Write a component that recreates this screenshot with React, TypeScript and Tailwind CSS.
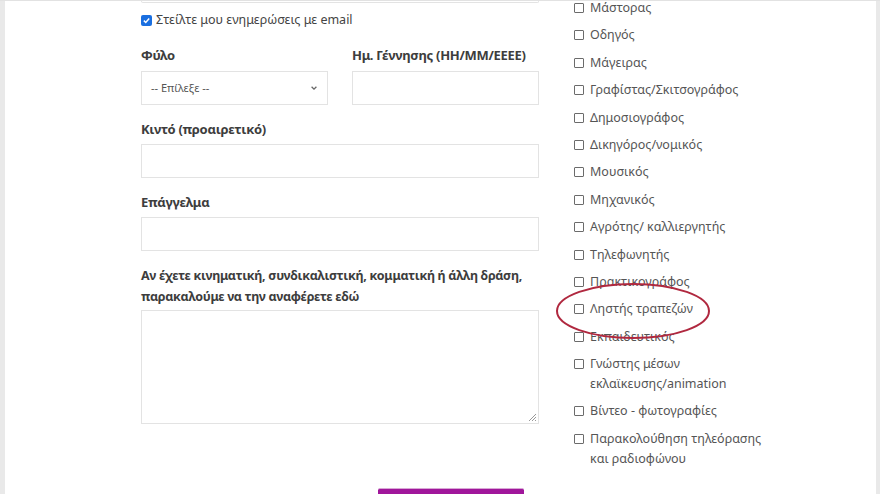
import React from "react";

const professions: string[][] = [
  ["Μάστορας"],
  ["Οδηγός"],
  ["Μάγειρας"],
  ["Γραφίστας/Σκιτσογράφος"],
  ["Δημοσιογράφος"],
  ["Δικηγόρος/νομικός"],
  ["Μουσικός"],
  ["Μηχανικός"],
  ["Αγρότης/ καλλιεργητής"],
  ["Τηλεφωνητής"],
  ["Πρακτικογράφος"],
  ["Ληστής τραπεζών"],
  ["Εκπαιδευτικός"],
  ["Γνώστης μέσων", "εκλαϊκευσης/animation"],
  ["Βίντεο - φωτογραφίες"],
  ["Παρακολούθηση τηλεόρασης", "και ραδιοφώνου"],
];

function Label({ children }: { children: React.ReactNode }) {
  return (
    <p className="whitespace-nowrap text-[13px] font-bold leading-[20px] tracking-[-0.3px] text-[#3d3d3d]">
      {children}
    </p>
  );
}

function TextInput() {
  return <div className="h-[34px] w-full border border-[#e3e3e3] bg-white" />;
}

function ProfessionItem({ lines }: { lines: string[] }) {
  return (
    <div className="mb-[7.4px] flex items-start gap-[6px] text-[12.5px] leading-[20px] text-[#555]">
      <span className="mt-[5px] h-[10px] w-[10px] shrink-0 rounded-[1px] border border-[#6b6b6b] bg-white" />
      <span className="whitespace-nowrap">
        {lines.map((l, i) => (
          <React.Fragment key={i}>
            {i > 0 && <br />}
            {l}
          </React.Fragment>
        ))}
      </span>
    </div>
  );
}

export default function App() {
  return (
    <div
      className="relative h-[494px] w-[880px] overflow-hidden border-t border-[#e2e2e2] bg-[#e9e9e9]"
      style={{ fontFamily: '"Noto Sans", "Open Sans", sans-serif' }}
    >
      <div className="ml-[5px] mr-[4px] flex h-full bg-white pl-[136px]">
        {/* Left form column */}
        <div className="w-[398px] shrink-0">
          <div className="h-[2px] rounded-b-[3px] border-x border-b border-[#e3e3e3]" />

          <label className="mt-[7px] flex items-center gap-[4px] text-[12.5px] leading-[20px] text-[#444]">
            <span className="flex h-[11px] w-[11px] items-center justify-center rounded-[2px] bg-[#1a6fe0]">
              <svg viewBox="0 0 12 12" className="h-[9px] w-[9px]" fill="none" stroke="white" strokeWidth="2">
                <path d="M2.5 6.2 5 8.6 9.6 3.4" />
              </svg>
            </span>
            Στείλτε μου ενημερώσεις με email
          </label>

          <div className="mt-[15px] flex gap-[24px]">
            <div className="w-[187px]">
              <Label>Φύλο</Label>
              <div className="mt-[6px] flex h-[34px] items-center justify-between border border-[#e3e3e3] bg-white px-[9px]">
                <span className="text-[11px] text-[#555]">-- Επίλεξε --</span>
                <svg viewBox="0 0 10 10" className="h-[8px] w-[8px]" fill="none" stroke="#666" strokeWidth="1.6">
                  <path d="M2 3.5 5 6.5 8 3.5" />
                </svg>
              </div>
            </div>
            <div className="flex-1">
              <Label>Ημ. Γέννησης (ΗΗ/ΜΜ/ΕΕΕΕ)</Label>
              <div className="mt-[6px]">
                <TextInput />
              </div>
            </div>
          </div>

          <div className="mt-[14px]">
            <Label>Κιντό (προαιρετικό)</Label>
            <div className="mt-[5px]">
              <TextInput />
            </div>
          </div>

          <div className="mt-[14px]">
            <Label>Επάγγελμα</Label>
            <div className="mt-[5px]">
              <TextInput />
            </div>
          </div>

          <div className="mt-[14px]">
            <p className="whitespace-nowrap text-[12.5px] font-bold leading-[21px] tracking-[-0.3px] text-[#3d3d3d]">
              Αν έχετε κινηματική, συνδικαλιστική, κομματική ή άλλη δράση,
              <br />
              παρακαλούμε να την αναφέρετε εδώ
            </p>
            <div className="relative mt-[3px] h-[114px] w-full border border-[#e3e3e3] bg-white">
              <svg viewBox="0 0 10 10" className="absolute bottom-[1px] right-[1px] h-[10px] w-[10px]" stroke="#999" strokeWidth="1">
                <path d="M9 2 2 9M9 5 5 9M9 8 8 9" />
              </svg>
            </div>
          </div>

          <div className="ml-[237px] mt-[64px]">
            <div className="h-[20px] w-[146px] rounded-t-[2px] border-t border-[#d9a7d6] bg-[#a0169b]" />
          </div>
        </div>

        {/* Right checkbox column */}
        <div className="ml-[35px] -mt-[3px] w-[200px]">
          {professions.map((p, i) => (
            <ProfessionItem key={i} lines={p} />
          ))}
        </div>
      </div>

      {/* hand-drawn highlight */}
      <svg className="pointer-events-none absolute left-[555px] top-[281px]" width="158" height="60" viewBox="0 0 158 60" fill="none">
        <ellipse cx="78" cy="29" rx="76" ry="27" stroke="#b0283f" strokeWidth="2" />
      </svg>
    </div>
  );
}
